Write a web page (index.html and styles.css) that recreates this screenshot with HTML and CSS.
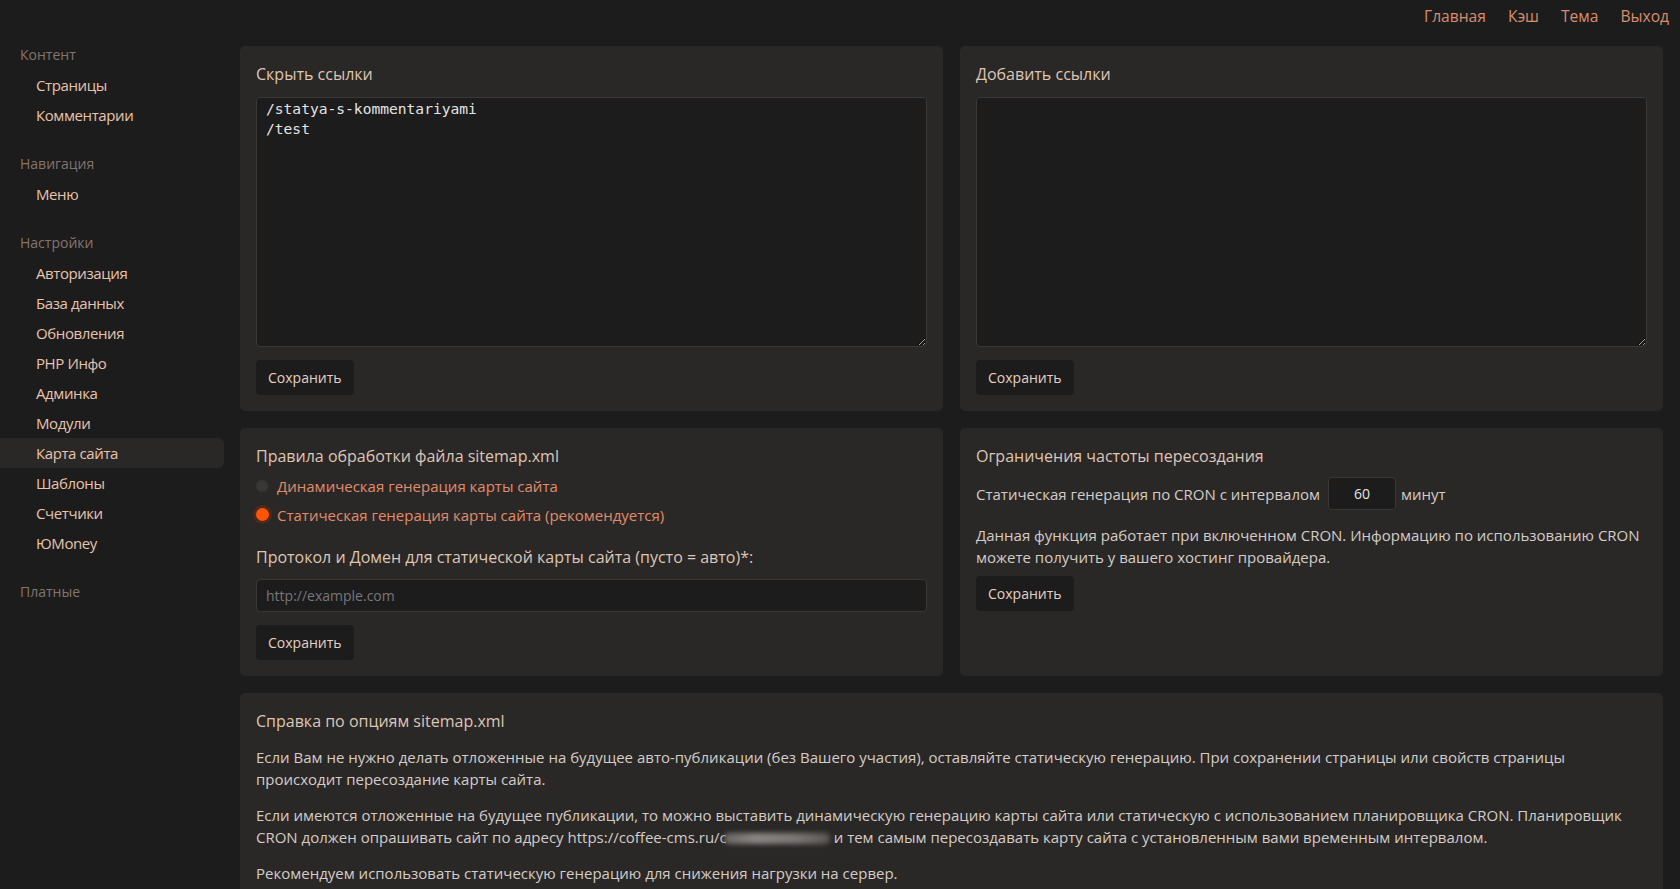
FILE: index.html
```html
<!DOCTYPE html>
<html lang="ru">
<head>
<meta charset="UTF-8" />
<meta name="viewport" content="width=device-width, initial-scale=1" />
<title>Карта сайта</title>
<link rel="stylesheet" href="styles.css">
</head>
<body>

<div class="topbar">
  <a href="#">Главная</a>
  <a href="#">Кэш</a>
  <a href="#">Тема</a>
  <a href="#">Выход</a>
</div>

<div class="layout">
  <aside class="sidebar">
    <div class="group">
      <div class="group-title">Контент</div>
      <a class="item" href="#">Страницы</a>
      <a class="item" href="#">Комментарии</a>
    </div>
    <div class="group">
      <div class="group-title">Навигация</div>
      <a class="item" href="#">Меню</a>
    </div>
    <div class="group">
      <div class="group-title">Настройки</div>
      <a class="item" href="#">Авторизация</a>
      <a class="item" href="#">База данных</a>
      <a class="item" href="#">Обновления</a>
      <a class="item" href="#">PHP Инфо</a>
      <a class="item" href="#">Админка</a>
      <a class="item" href="#">Модули</a>
      <a class="item active" href="#">Карта сайта</a>
      <a class="item" href="#">Шаблоны</a>
      <a class="item" href="#">Счетчики</a>
      <a class="item" href="#">ЮMoney</a>
    </div>
    <div class="group">
      <div class="group-title">Платные</div>
    </div>
  </aside>

  <main class="content">
    <div class="cards">
      <section class="card">
        <div class="card-title">Скрыть ссылки</div>
        <textarea class="links" spellcheck="false">/statya-s-kommentariyami
/test</textarea>
        <button class="btn btn-after-area">Сохранить</button>
      </section>

      <section class="card">
        <div class="card-title">Добавить ссылки</div>
        <textarea class="links" spellcheck="false"></textarea>
        <button class="btn btn-after-area">Сохранить</button>
      </section>

      <section class="card">
        <div class="card-title">Правила обработки файла sitemap.xml</div>
        <div class="radios">
          <label class="radio"><input type="radio" name="mode"> Динамическая генерация карты сайта</label>
          <label class="radio"><input type="radio" name="mode" checked> Статическая генерация карты сайта (рекомендуется)</label>
        </div>
        <div class="field-label">Протокол и Домен для статической карты сайта (пусто = авто)*:</div>
        <input class="text-input" type="text" placeholder="http://example.com">
        <button class="btn btn-after-input">Сохранить</button>
      </section>

      <section class="card">
        <div class="card-title">Ограничения частоты пересоздания</div>
        <div class="interval">
          <span>Статическая генерация по CRON с интервалом</span>
          <input class="num-input" type="text" value="60">
          <span>минут</span>
        </div>
        <p class="note">Данная функция работает при включенном CRON. Информацию по использованию CRON можете получить у вашего хостинг провайдера.</p>
        <button class="btn btn-after-note">Сохранить</button>
      </section>

      <section class="card wide">
        <div class="card-title">Справка по опциям sitemap.xml</div>
        <p class="help">Если Вам не нужно делать отложенные на будущее авто-публикации (без Вашего участия), оставляйте статическую генерацию. При сохранении страницы или свойств страницы происходит пересоздание карты сайта.</p>
        <p class="help">Если имеются отложенные на будущее публикации, то можно выставить динамическую генерацию карты сайта или статическую с использованием планировщика CRON. Планировщик CRON должен опрашивать сайт по адресу https://coffee-cms.ru/c<span class="blur"></span> и тем самым пересоздавать карту сайта с установленным вами временным интервалом.</p>
        <p class="help">Рекомендуем использовать статическую генерацию для снижения нагрузки на сервер.</p>
      </section>
    </div>
  </main>
</div>

</body>
</html>
```

FILE: styles.css
```css
* {
  box-sizing: border-box;
}
body {
  margin: 0;
  background: #1c1c1c;
  color: #d4ccc8;
  font-family: "Open Sans", "Noto Sans", sans-serif;
  font-size: 15px;
  overflow: hidden;
}
a {
  text-decoration: none;
}

/* top menu */
.topbar {
  height: 32px;
  display: flex;
  justify-content: flex-end;
  align-items: center;
}
.topbar a {
  color: #d98c6e;
  font-size: 15.6px;
  padding: 0 11px;
}

.layout {
  display: flex;
  align-items: flex-start;
}

/* left menu */
.sidebar {
  width: 224px;
  flex: none;
  padding-top: 8px;
}
.group + .group {
  margin-top: 19px;
}
.group-title {
  height: 30px;
  line-height: 30px;
  padding-left: 20px;
  color: #85746e;
  font-size: 14px;
}
.item {
  display: block;
  height: 30px;
  line-height: 30px;
  padding-left: 36px;
  color: #e8c3ad;
  font-size: 15px;
  letter-spacing: -0.4px;
  border-radius: 0 6px 6px 0;
}
.item.active {
  background: #2a2826;
}

/* cards */
.content {
  flex: 1;
  padding: 14px 17px 0 16px;
}
.cards {
  display: grid;
  grid-template-columns: 1fr 1fr;
  gap: 17px;
}
.card {
  background: #2a2826;
  border-radius: 5px;
  padding: 16px;
}
.card.wide {
  grid-column: 1 / 3;
}
.card-title {
  font-size: 16px;
  line-height: 24px;
  color: #dec5b6;
}

.links {
  display: block;
  width: 100%;
  height: 250px;
  margin-top: 11px;
  background: #1c1c1c;
  border: 1px solid #3a3735;
  border-radius: 4px;
  color: #e4e4e4;
  font-family: "DejaVu Sans Mono", "Liberation Mono", monospace;
  font-size: 14.6px;
  line-height: 20px;
  padding: 1px 9px;
  outline: none;
}

.btn {
  display: block;
  height: 35px;
  padding: 0 12px;
  background: #1c1c1c;
  color: #e4d0c4;
  border: none;
  border-radius: 4px;
  font-family: inherit;
  font-size: 14px;
  cursor: pointer;
}
.btn-after-area {
  margin-top: 13px;
}
.btn-after-input {
  margin-top: 13px;
}
.btn-after-note {
  margin-top: 8px;
}

.radios {
  margin-top: 3px;
}
.radio {
  display: flex;
  align-items: center;
  height: 29px;
  color: #e08c6c;
  font-size: 15px;
}
.radio input {
  appearance: none;
  -webkit-appearance: none;
  width: 12px;
  height: 12px;
  margin: 0 9px 0 0;
  border-radius: 50%;
  background: #3a3634;
}
.radio input:checked {
  width: 13px;
  height: 13px;
  margin-left: -0.5px;
  margin-right: 8.5px;
  background: #ff5500;
  box-shadow: 0 0 0 3px #4a2a1f;
}

.field-label {
  margin-top: 16px;
  font-size: 16px;
  line-height: 24px;
  color: #dec5b6;
}
.text-input {
  display: block;
  width: 100%;
  height: 33px;
  margin-top: 10px;
  padding: 0 9px;
  background: #1c1c1c;
  border: 1px solid #3a3735;
  border-radius: 4px;
  color: #e4e4e4;
  font-family: inherit;
  font-size: 14px;
  outline: none;
}
.text-input::placeholder {
  color: #777;
}

.interval {
  display: flex;
  align-items: center;
  gap: 8px;
  margin-top: 9px;
  height: 33px;
}
.num-input {
  width: 68px;
  height: 33px;
  margin: 0 -3px 0 0;
  background: #1c1c1c;
  border: 1px solid #3a3735;
  border-radius: 4px;
  color: #e4e4e4;
  font-family: inherit;
  font-size: 14px;
  text-align: center;
  outline: none;
}
.note {
  margin: 15px 0 0 0;
  line-height: 21.5px;
}

.help {
  margin: 14px 0 0 0;
  line-height: 21.5px;
}
.help + .help {
  margin-top: 15px;
}
.blur {
  display: inline-block;
  width: 106px;
  height: 11px;
  margin-left: -3px;
  vertical-align: -1px;
  border-radius: 5px;
  background: linear-gradient(90deg, #6a6664, #8a8684 30%, #7a7674 70%, #5a5654);
  filter: blur(2.5px);
}
```
